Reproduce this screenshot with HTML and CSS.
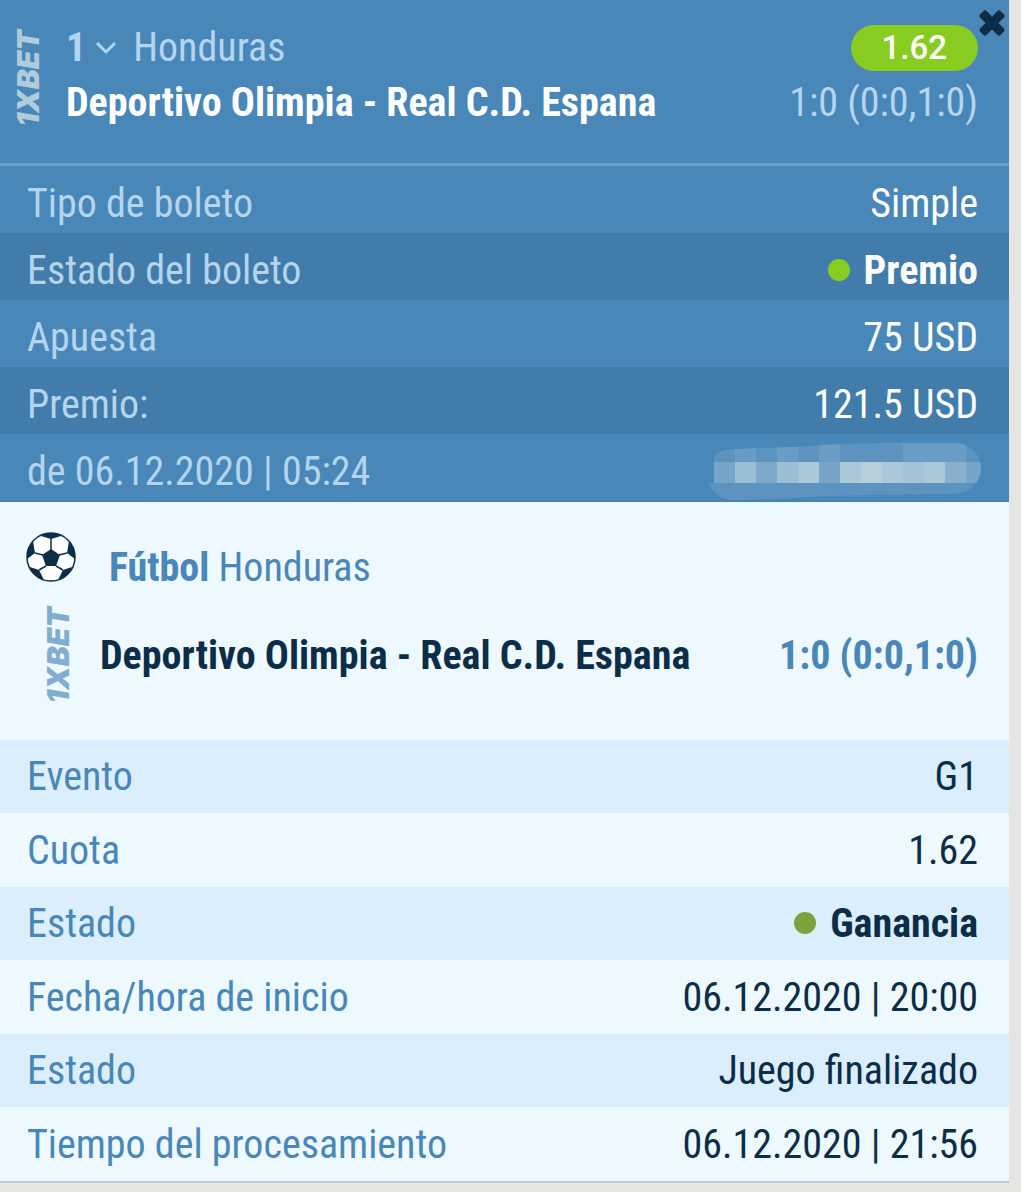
FILE: index.html
```
<!DOCTYPE html>
<html lang="es">
<head>
<meta charset="utf-8">
<meta name="viewport" content="width=device-width, initial-scale=1">
<title>Boleto</title>
<link rel="stylesheet" href="styles.css">
</head>
<body>
<main class="ticket">
  <section class="summary">
    <header class="summary-head">
      <span class="brand">1XBET</span>
      <div class="event">
        <div class="line">
          <button class="toggle" type="button"><b>1</b>
            <svg class="chevron" viewBox="0 0 22 14" aria-hidden="true"><path d="M2 2l9 9 9-9" fill="none" stroke="currentColor" stroke-width="3"/></svg>
          </button>
          <span class="league">Honduras</span>
          <span class="odds">1.62</span>
        </div>
        <div class="line">
          <strong class="teams">Deportivo Olimpia - Real C.D. Espana</strong>
          <span class="score">1:0 (0:0,1:0)</span>
        </div>
      </div>
      <button class="close" type="button" aria-label="Cerrar">
        <svg viewBox="0 0 28 28" aria-hidden="true"><path d="M5 5l18 18M23 5L5 23" stroke="currentColor" stroke-width="7"/><path d="M4 7l3-3 17 17-3 3zM21 4l3 3L7 24l-3-3z" fill="currentColor" stroke="currentColor" stroke-width="5" stroke-linejoin="round"/></svg>
      </button>
    </header>
    <table class="rows rows-dark">
      <tbody>
        <tr><th scope="row">Tipo de boleto</th><td>Simple</td></tr>
        <tr><th scope="row">Estado del boleto</th><td><span class="dot"></span><b>Premio</b></td></tr>
        <tr><th scope="row">Apuesta</th><td>75 USD</td></tr>
        <tr><th scope="row">Premio:</th><td>121.5 USD</td></tr>
        <tr><th scope="row">de 06.12.2020 | 05:24</th><td class="masked">
          <svg class="mask" viewBox="0 0 276 58" role="img" aria-label="Número oculto">
            <defs><clipPath id="blob"><path d="M8 16Q12 7 28 7L90 5Q120 2 180 1H250Q274 4 275 27Q272 52 244 52L170 53 120 54 70 57 24 58Q8 55 2 41H8Z"/></clipPath></defs>
            <g clip-path="url(#blob)">
              <path fill="#5d94bf" d="M0 0h276v58H0z"/>
              <path fill="#699dc5" d="M29 0h21v20H29zM71 0h21v20H71zM113 0h21v20h-21zM197 0h42v20h-42zM239 0h21v20h-21z"/>
              <path fill="#77a5c9" d="M8 20h21v21H8zM113 20h21v21h-21zM260 20h21v21h-21z"/>
              <path fill="#7fa9ca" d="M50 20h21v21H50z"/>
              <path fill="#8aafcb" d="M239 20h21v21h-21z"/>
              <path fill="#9bbfd4" d="M29 20h21v21H29zM71 20h21v21H71z"/>
              <path fill="#abc8d9" d="M92 20h21v21H92zM134 20h21v21h-21zM176 20h21v21h-21zM218 20h21v21h-21z"/>
              <path fill="#a4c2d6" d="M197 20h21v21h-21z"/>
              <path fill="#b7d0dc" d="M155 20h21v21h-21z"/>
            </g>
          </svg>
        </td></tr>
      </tbody>
    </table>
  </section>

  <section class="match">
    <div class="sport">
      <svg class="ball" viewBox="0 0 50 50" aria-hidden="true">
        <defs><clipPath id="ring"><circle cx="25" cy="25" r="24"/></clipPath></defs>
        <circle cx="25" cy="25" r="24" fill="#fff"/>
        <g clip-path="url(#ring)" fill="#0b2d48">
          <path d="M25 17l9 6-4 11H20l-4-11zM15 4l10 3 10-3-3-4H18zM43 9l-2 12 8 6 4-9zM7 9l2 12-8 6-4-9zM46 35l-9 3-5 10 8 3zM4 35l9 3 5 10-8 3z"/>
          <path fill="none" stroke="#0b2d48" stroke-width="1.5" d="M25 6v12M33 23l8-2M30 34l7 4M20 34l-7 4M17 23l-8-2"/>
        </g>
        <circle cx="25" cy="25" r="24" fill="none" stroke="#0b2d48" stroke-width="1.5"/>
      </svg>
      <p class="sport-name"><b>Fútbol</b> Honduras</p>
    </div>
    <div class="result">
      <span class="brand">1XBET</span>
      <strong class="teams">Deportivo Olimpia - Real C.D. Espana</strong>
      <b class="score">1:0 (0:0,1:0)</b>
    </div>
  </section>

  <table class="rows rows-light">
    <tbody>
      <tr><th scope="row">Evento</th><td>G1</td></tr>
      <tr><th scope="row">Cuota</th><td>1.62</td></tr>
      <tr><th scope="row">Estado</th><td><span class="dot"></span><b>Ganancia</b></td></tr>
      <tr><th scope="row">Fecha/hora de inicio</th><td>06.12.2020 | 20:00</td></tr>
      <tr><th scope="row">Estado</th><td>Juego finalizado</td></tr>
      <tr><th scope="row">Tiempo del procesamiento</th><td>06.12.2020 | 21:56</td></tr>
    </tbody>
  </table>
</main>
</body>
</html>
```
FILE: styles.css
```
* {
  box-sizing: border-box;
}

body {
  margin: 0;
  padding-right: 12px;
  background: #e5e5e4;
  font: 40px/55px "Roboto Condensed", Roboto, sans-serif;
}

button {
  padding: 0;
  border: 0;
  background: none;
  color: inherit;
  font: inherit;
  cursor: pointer;
}

p {
  margin: 0;
}

.ticket {
  background: #eef8ff;
  border-bottom: 2px solid #b9ccd8;
}

/* Ticket summary */
.summary {
  background: #4887b8;
  border-bottom: 1px solid #427ead;
}

.summary-head {
  position: relative;
  display: flex;
  padding: 20px 31px 33px 16px;
  border-bottom: 3px solid #6a9fca;
  color: #b3d5f1;
}

.brand {
  align-self: center;
  flex: none;
  width: 24px;
  writing-mode: vertical-rl;
  transform: rotate(180deg);
  font: italic 900 30px/24px Inter, sans-serif;
  color: #b0cbdc;
}

.summary .brand {
  margin-top: 6px;
}

.event {
  flex: 1;
  margin-left: 26px;
}

.line {
  display: flex;
  align-items: center;
}

.toggle {
  display: flex;
  align-items: center;
  gap: 9px;
}

.chevron {
  width: 22px;
  height: 14px;
}

.league {
  margin-left: 16px;
}

.odds {
  margin-left: auto;
  padding: 0 31px;
  border-radius: 23px;
  background: #88cc22;
  color: #fff;
  font: 500 33px/46px Roboto, sans-serif;
}

.score {
  margin-left: auto;
}

.summary .teams {
  color: #fff;
}

.close {
  position: absolute;
  top: 9px;
  right: 3px;
  width: 28px;
  height: 28px;
  color: #0b2d48;
}

.close svg {
  display: block;
}

/* Label and value rows */
.rows {
  width: 100%;
  border-collapse: collapse;
}

.rows th {
  padding: 0 0 0 27px;
  font-weight: 400;
  text-align: left;
}

.rows td {
  padding: 0 31px 0 0;
  text-align: right;
}

.rows-dark tr {
  height: 67px;
}

.rows-dark th,
.rows-dark td {
  padding-top: 7px;
}

.rows-dark tr:nth-child(even) {
  background: #427caa;
}

.rows-dark th {
  color: #b3d5ee;
}

.rows-dark td {
  color: #fff;
}

.rows-dark .masked {
  padding-right: 27px;
}

.mask {
  display: block;
  width: 276px;
  height: 58px;
  margin-left: auto;
}

.dot {
  display: inline-block;
  width: 22px;
  height: 22px;
  margin-right: 14px;
  border-radius: 50%;
  background: #88cc22;
  vertical-align: 3px;
}

/* Match */
.match {
  padding: 30px 31px 35px 26px;
  color: #4887b8;
}

.sport {
  display: flex;
}

.ball {
  width: 50px;
  height: 50px;
}

.sport-name {
  margin: 8px 0 0 33px;
}

.result {
  display: flex;
  align-items: center;
  height: 100px;
  margin-top: 10px;
  padding-left: 20px;
}

.match .brand {
  color: #82acd0;
}

.match .teams {
  margin-left: 30px;
  color: #0b2d48;
}

.rows-light tr {
  height: 73px;
}

.rows-light tr:nth-child(even) {
  height: 74px;
}

.rows-light tr:nth-child(odd) {
  background: #daeefe;
}

.rows-light th {
  color: #4887b8;
}

.rows-light td {
  color: #0b2d48;
}

.rows-light .dot {
  background: #7aa33c;
}
```
